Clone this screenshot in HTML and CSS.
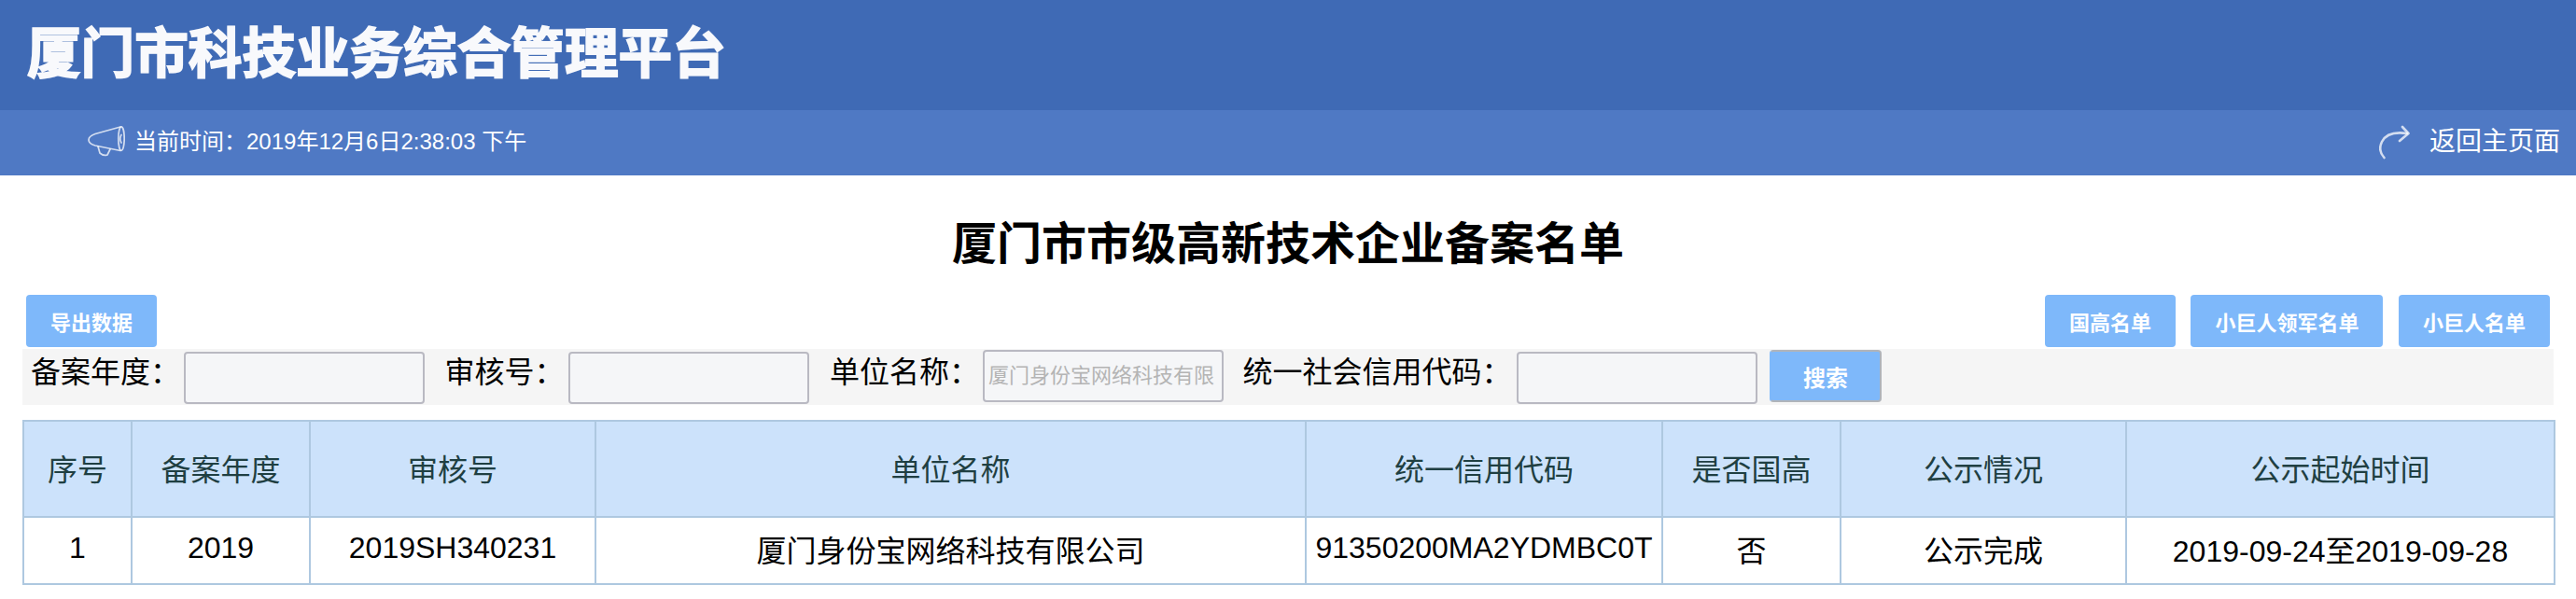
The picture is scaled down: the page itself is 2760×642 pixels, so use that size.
FILE: index.html
```html
<!DOCTYPE html>
<html lang="zh-CN">
<head>
<meta charset="utf-8">
<title>厦门市市级高新技术企业备案名单</title>
<link rel="stylesheet" href="styles.css">
</head>
<body>
<header class="banner"><div class="logo">厦门市科技业务综合管理平台</div></header>
<nav class="statusbar">
  <div class="clock">
    <svg class="icon-horn" viewBox="0 0 40 33" width="40" height="33" aria-hidden="true">
      <ellipse cx="36" cy="13.6" rx="3.2" ry="12.8"/>
      <path d="M35 1 L8 8.5 Q1 11 1 15 Q1 19 8 21 L35 26.5"/>
      <path d="M36 9.5 Q33.5 13.6 36 18"/>
      <path d="M11 22 L13 29 Q17 32.5 21 31 L24 25"/>
    </svg>
    <span>当前时间：2019年12月6日2:38:03 下午</span>
  </div>
  <a class="back">
    <svg class="icon-back" viewBox="0 0 33 37" width="33" height="37" aria-hidden="true">
      <path d="M5.5 35 C1 30 0 24 3 18 C7 10 16 7 30 9"/>
      <path d="M25 2 L31.5 9 L22 17"/>
    </svg>
    <span>返回主页面</span>
  </a>
</nav>
<main class="page">
  <h1 class="title">厦门市市级高新技术企业备案名单</h1>
  <div class="actions">
    <button class="btn">导出数据</button>
    <div class="actions-right">
      <button class="btn">国高名单</button>
      <button class="btn">小巨人领军名单</button>
      <button class="btn">小巨人名单</button>
    </div>
  </div>
  <form class="filters">
    <label class="flabel">备案年度：</label><input class="finput">
    <label class="flabel second">审核号：</label><input class="finput">
    <label class="flabel third">单位名称：</label><input class="finput raised" placeholder="厦门身份宝网络科技有限公司">
    <label class="flabel fourth">统一社会信用代码：</label><input class="finput">
    <button class="search" type="button">搜索</button>
  </form>
  <table class="grid">
    <colgroup>
      <col class="c1"><col class="c2"><col class="c3"><col class="c4"><col class="c5"><col class="c6"><col class="c7"><col class="c8">
    </colgroup>
    <thead>
      <tr><th>序号</th><th>备案年度</th><th>审核号</th><th>单位名称</th><th>统一信用代码</th><th>是否国高</th><th>公示情况</th><th>公示起始时间</th></tr>
    </thead>
    <tbody>
      <tr><td>1</td><td>2019</td><td>2019SH340231</td><td>厦门身份宝网络科技有限公司</td><td>91350200MA2YDMBC0T</td><td>否</td><td>公示完成</td><td>2019-09-24至2019-09-28</td></tr>
    </tbody>
  </table>
</main>
</body>
</html>
```
FILE: styles.css
```css
* { box-sizing: border-box; }
html, body { margin: 0; background: #fff; }
body { font-family: "Liberation Sans", "Noto Sans CJK SC", sans-serif; color: #000; }

.banner { height: 118px; background: #3f6ab5; padding: 28px 0 0 29px; }
.logo {
  font-size: 57.6px; line-height: 60px; font-weight: 700; color: #f8f9fc;
  -webkit-text-stroke: 1.8px #f8f9fc; text-shadow: 0 0 1.5px rgba(248, 249, 252, .7); white-space: nowrap;
}

.statusbar {
  height: 70px; background: #4f79c4; color: #fff;
  display: flex; justify-content: space-between; align-items: center;
  padding: 0 17px 0 94px;
}
.clock { display: flex; align-items: center; gap: 10px; font-size: 24px; line-height: 30px; padding-bottom: 3px; }
.back { display: flex; align-items: center; gap: 21px; font-size: 28px; line-height: 34px; padding-bottom: 2px; }
.icon-horn, .icon-back { fill: none; stroke: #fff; stroke-opacity: .75; stroke-linecap: round; stroke-linejoin: round; }
.icon-horn { stroke-width: 1.7; }
.icon-back { stroke-width: 2.6; }

.page { padding: 0 24px; }
.title { margin: 0; padding: 50px 0 30px; font-size: 48px; line-height: 48px; font-weight: 700; text-align: center; }

.actions { display: flex; justify-content: space-between; padding: 0 4px; }
.actions-right { display: flex; gap: 16.5px; }
.btn {
  height: 56px; padding: 0 26px; border: 0; border-radius: 4px;
  background: #7eb8fa; color: #fff; font: 700 22px "Liberation Sans", "Noto Sans CJK SC", sans-serif;
}

.filters {
  margin-top: 2px; height: 60px; background: #f5f5f5; padding-left: 9px;
  display: flex; align-items: flex-start;
}
.flabel { font-size: 32px; line-height: 50px; white-space: nowrap; }
.finput {
  width: 258px; height: 56px; margin: 3px 0 0 4px; padding: 0 10px;
  background: #f5f6f8; border: 2px solid #b9b9c2; border-radius: 4px;
  font: 22px "Liberation Sans", "Noto Sans CJK SC", sans-serif;
}
.finput.raised { margin-top: 1px; padding: 0 8px 0 4px; }
.finput::placeholder { color: #b4b4b4; opacity: 1; }
.second { margin-left: 21.5px; }
.third { margin-left: 22.5px; }
.fourth { margin-left: 20.5px; margin-right: 1.5px; }
.search {
  width: 120px; height: 56px; margin: 1px 0 0 13px; padding: 0;
  background: #7eb8fa; color: #fff; border: 2px solid #b0b4ba; border-left-color: #7eb8fa; border-radius: 4px;
  font: 700 24px "Liberation Sans", "Noto Sans CJK SC", sans-serif;
}

.grid { margin-top: 16px; width: 2712px; table-layout: fixed; border-collapse: collapse; border: 2px solid #aec8e0; }
.c1 { width: 116px; }
.c2 { width: 191px; }
.c3 { width: 306px; }
.c4 { width: 761px; }
.c5 { width: 382px; }
.c6 { width: 191px; }
.c7 { width: 306px; }
.c8 { width: 459px; }
.grid th, .grid td { border: 2px solid #aec8e0; padding: 0; text-align: center; font-size: 32px; font-weight: 400; white-space: nowrap; }
.grid th { height: 103px; background: #cce2fb; color: #1f3f42; padding-bottom: 4px; }
.grid td { height: 72px; padding-bottom: 5px; }
```
